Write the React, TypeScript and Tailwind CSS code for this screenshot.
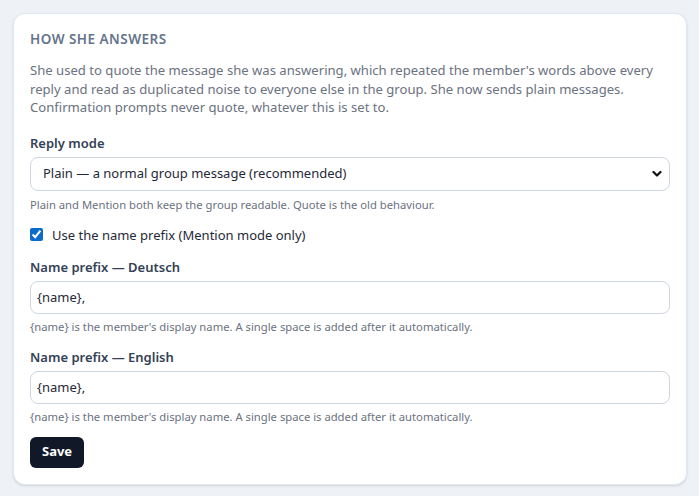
import React from "react";

const font = { fontFamily: '"Noto Sans", "Open Sans", sans-serif' };

function Hint({ children, className = "" }: { children: React.ReactNode; className?: string }) {
  return <p className={`text-[11.25px] leading-4 text-[#6b7280] ${className}`}>{children}</p>;
}

function PrefixField({ label }: { label: string }) {
  return (
    <div className="mt-[12px]">
      <label className="block text-[13px] font-semibold leading-5 text-[#334155]">{label}</label>
      <input
        defaultValue="{name},"
        className="mt-[4px] block h-[33px] w-full rounded-lg border border-[#cfd6df] bg-white px-[6px] text-[13px] text-[#1f2937] outline-none"
      />
      <Hint className="mt-[5px]">
        {"{name}"} is the member's display name. A single space is added after it automatically.
      </Hint>
    </div>
  );
}

export default function App() {
  return (
    <div className="min-h-[496px] bg-[#eef2f7] p-[13px] pr-[12px]" style={font}>
      <div className="rounded-xl border border-[#e2e8f0] bg-white px-[16px] pt-[15px] pb-[16px] shadow-sm">
        <h2 className="text-[13.5px] font-semibold uppercase leading-5 tracking-[0.035em] text-[#64748b]">
          How she answers
        </h2>
        <p className="mt-[12px] text-[13.1px] leading-[18.5px] text-[#6b7280]">
          She used to quote the message she was answering, which repeated the member's words above every reply and
          read as duplicated noise to everyone else in the group. She now sends plain messages. Confirmation prompts
          never quote, whatever this is set to.
        </p>

        <label className="mt-[16px] block text-[13px] font-semibold leading-5 text-[#334155]">Reply mode</label>
        <div className="relative mt-[4px]">
          <select className="block h-[34px] w-full appearance-none rounded-lg border border-[#cfd6df] bg-white px-[12px] text-[13px] text-[#1f2937] outline-none">
            <option>Plain — a normal group message (recommended)</option>
            <option>Mention — prefix with the member's name</option>
            <option>Quote — reply to the message</option>
          </select>
          <svg
            className="pointer-events-none absolute right-[8px] top-[13px]"
            width="10"
            height="8"
            viewBox="0 0 10 8"
            fill="none"
          >
            <path d="M1.5 2l3.5 3.5L8.5 2" stroke="#111" strokeWidth="2.2" strokeLinecap="round" strokeLinejoin="round" />
          </svg>
        </div>
        <Hint className="mt-[6px]">Plain and Mention both keep the group readable. Quote is the old behaviour.</Hint>

        <label className="mt-[12px] flex items-center gap-[9px] text-[13px] leading-5 text-[#1f2937]">
          <input type="checkbox" defaultChecked className="h-[13px] w-[13px] accent-[#0b6bcb]" />
          Use the name prefix (Mention mode only)
        </label>

        <PrefixField label="Name prefix — Deutsch" />
        <PrefixField label="Name prefix — English" />

        <button className="mt-[12px] h-[31px] rounded-md bg-[#111827] px-[12px] text-[13px] font-bold text-white">
          Save
        </button>
      </div>
    </div>
  );
}
